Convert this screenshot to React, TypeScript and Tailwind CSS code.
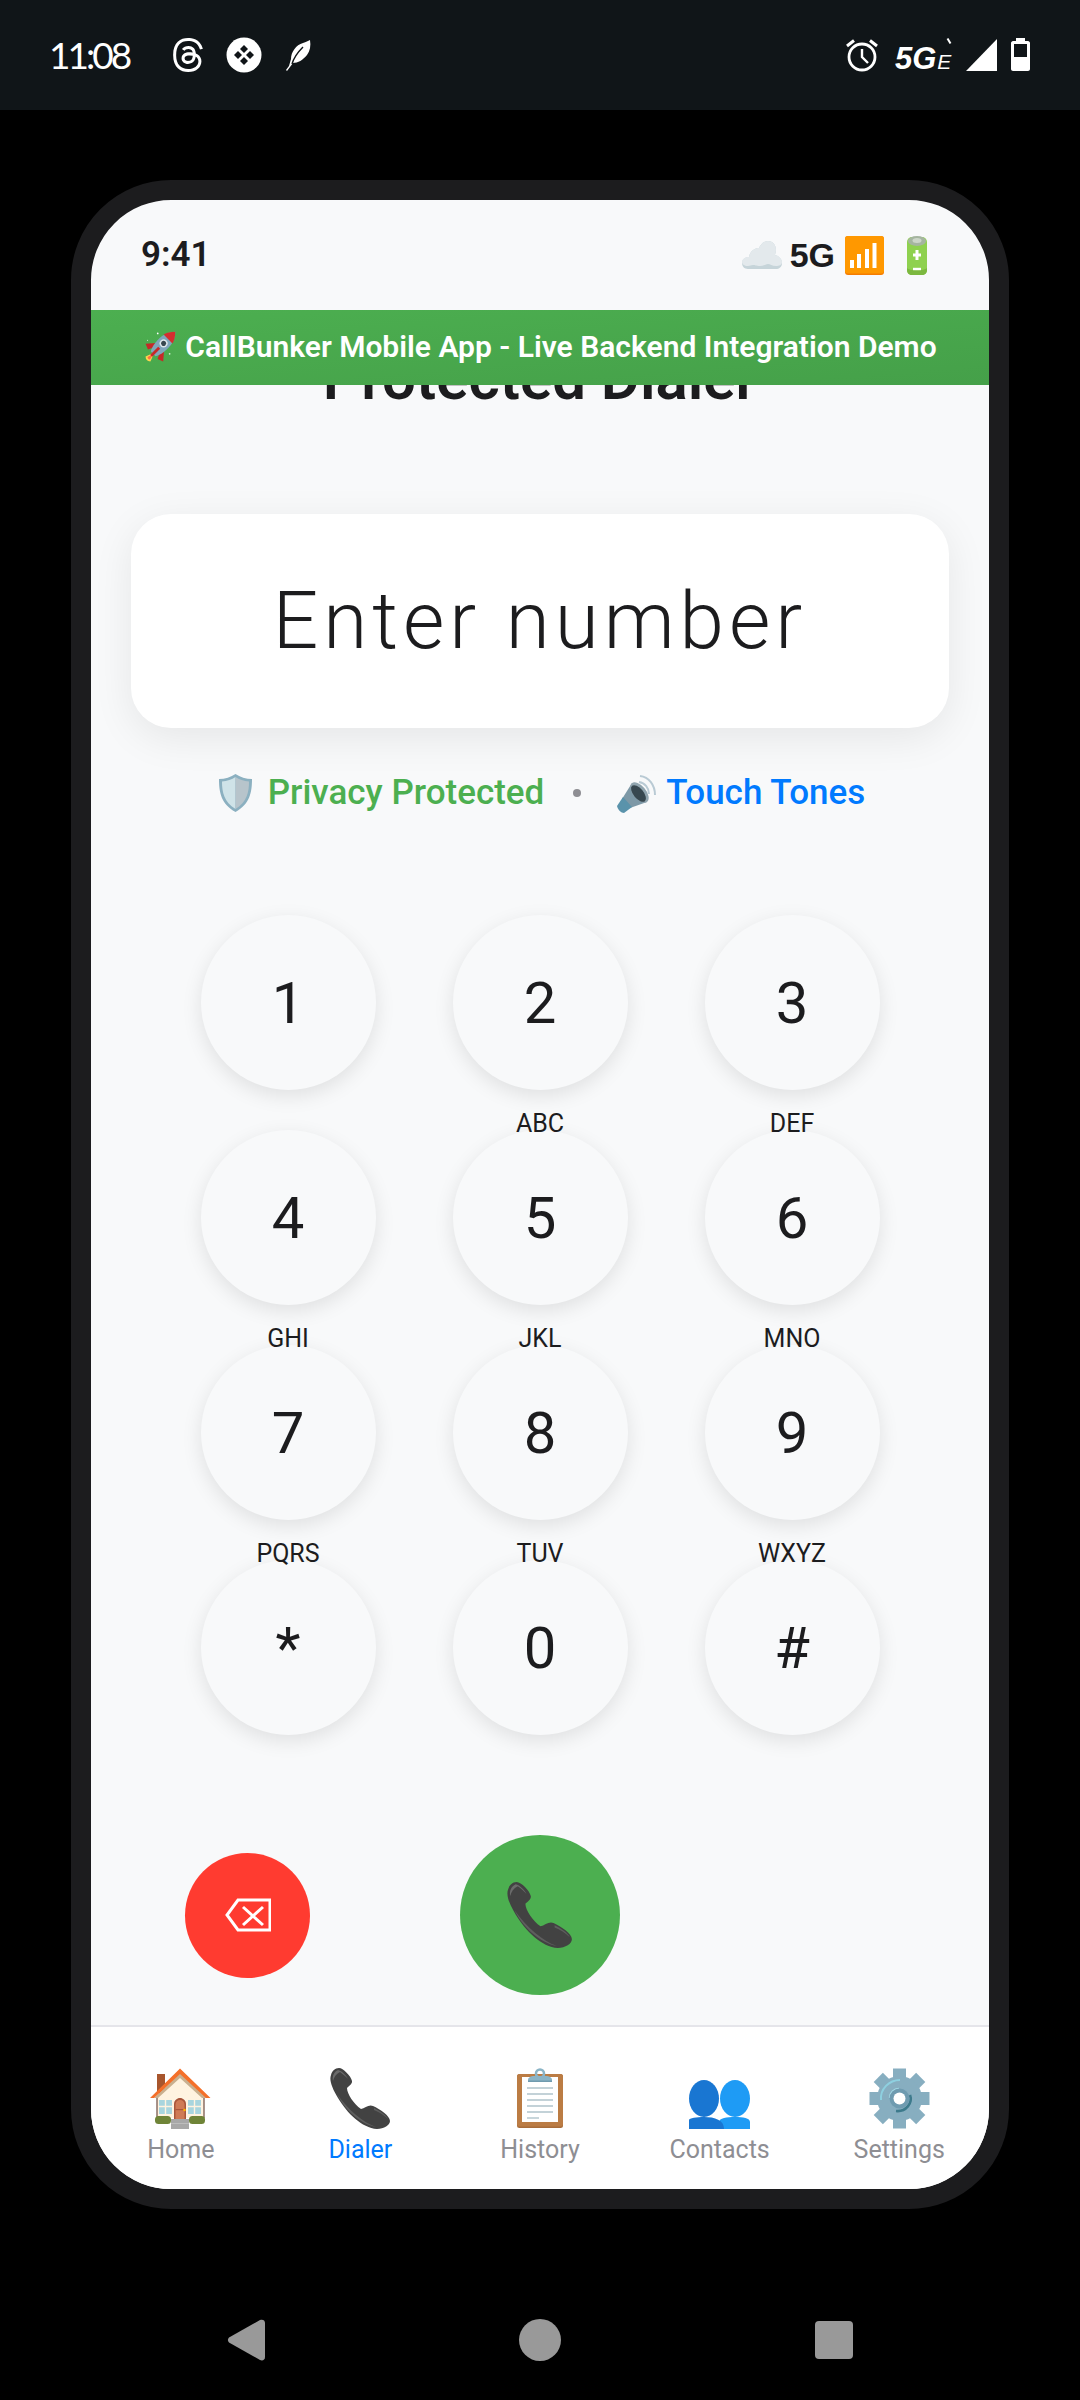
import React from 'react';
import { BsThreads } from 'react-icons/bs';

const keys = [
  { digit: '1', letters: '' },
  { digit: '2', letters: 'ABC' },
  { digit: '3', letters: 'DEF' },
  { digit: '4', letters: 'GHI' },
  { digit: '5', letters: 'JKL' },
  { digit: '6', letters: 'MNO' },
  { digit: '7', letters: 'PQRS' },
  { digit: '8', letters: 'TUV' },
  { digit: '9', letters: 'WXYZ' },
  { digit: '*', letters: '' },
  { digit: '0', letters: '' },
  { digit: '#', letters: '' },
];

const PhoneEmoji = ({ size }: { size: number }) => (
  <svg width={size} height={size} viewBox="0 0 61 61">
    <path d="M9 0C13 0 21 8 22 13C22.5 16 19 18 17 20C17 26 24 36 31 41C35 40 39 36 43 38C50 41 60 48 60 53C60 57 54 61 47 61C32 60 17 45 8 30C2 20-1 12 1 7C2 3 5 0 9 0Z" fill="#424242" />
    <path d="M8 2C4 4 2 8 3 13C4 9 6 6 10 4C13 6 16 9 18 11C16 7 12 3 8 2Z" fill="#6b6b6b" />
    <path d="M7 26C14 41 30 56 46 59C34 55 18 42 7 26Z" fill="#5e5e5e" />
    <path d="M44 40C50 43 56 47 58 51C54 47 49 44 44 42Z" fill="#5e5e5e" />
  </svg>
);

const HomeEmoji = () => (
  <svg width="61" height="61" viewBox="0 0 61 61">
    <rect x="7" y="6" width="8" height="19" fill="#a8562d" />
    <path d="M30 8L7 30V50H54V30Z" fill="#fff3e0" />
    <path d="M7 30V50M54 30V50" stroke="#6d4c41" strokeWidth="1.2" />
    <path d="M30 5L4 30H8L30 10L52 30H57Z" fill="#c9b08f" />
    <path d="M30 0.5L0 30H4L30 6L56 30H60.5Z" fill="#f4702a" />
    <rect x="9" y="32" width="13" height="14" fill="#a8d5de" />
    <path d="M15.5 32V46M9 38.5H22" stroke="#fff3e0" strokeWidth="1.4" />
    <rect x="38" y="32" width="13" height="14" fill="#a8d5de" />
    <path d="M44.5 32V46M38 38.5H51" stroke="#fff3e0" strokeWidth="1.4" />
    <path d="M24 51V36C24 32.5 27 30 30 30C33 30 36 32.5 36 36V51Z" fill="#a9553a" />
    <path d="M25.5 51V36.5C25.5 34 27.5 32 30 32C32.5 32 34.5 34 34.5 36.5V51Z" fill="#cf7a55" />
    <rect x="25.5" y="41" width="9" height="1.2" fill="#a9553a" />
    <circle cx="34.5" cy="42" r="1.3" fill="#ffb300" />
    <rect x="5" y="48" width="16" height="8" rx="3.5" fill="#6f8437" />
    <rect x="39" y="48" width="16" height="8" rx="3.5" fill="#6f8437" />
    <rect x="21" y="51" width="18" height="10" fill="#a8a8a8" />
    <rect x="21" y="55" width="18" height="1" fill="#bcbcbc" />
  </svg>
);

const ClipboardEmoji = () => (
  <svg width="46" height="61" viewBox="0 0 46 61">
    <rect x="0" y="6" width="46" height="54" rx="2.5" fill="#a86d3a" />
    <rect x="0" y="6" width="46" height="52.5" rx="2.5" fill="#bb7c44" />
    <rect x="5" y="9" width="36" height="45" fill="#ffffff" />
    <path d="M10 20H36M10 26H36M10 32H36M10 38H36M10 44H36" stroke="#b0c4cc" strokeWidth="1.4" />
    <path d="M10 50H22" stroke="#b0c4cc" strokeWidth="1.4" />
    <circle cx="23" cy="5.5" r="4" fill="none" stroke="#8ab4c6" strokeWidth="2.6" />
    <path d="M11 14V12C11 9.5 14 8 17 8H29C32 8 35 9.5 35 12V14Z" fill="#8ab4c6" />
    <rect x="11" y="12.5" width="24" height="1.5" fill="#6f9aae" />
  </svg>
);

const PeopleEmoji = () => (
  <svg width="61" height="61" viewBox="0 0 61 61">
    <ellipse cx="46" cy="30.5" rx="15" ry="18.5" fill="#1e9bf5" />
    <path d="M30 61V54C30 50 38 49 46 49C54 49 61 50 61 54V61Z" fill="#1e9bf5" />
    <ellipse cx="15" cy="30.5" rx="15" ry="18.5" fill="#1976d2" />
    <path d="M0 61V52C0 50 8 49 15 49C26 49 35 52 35 61Z" fill="#1976d2" />
  </svg>
);

const GearEmoji = () => (
  <svg width="61" height="61" viewBox="0 0 61 61">
    {[0, 45, 90, 135].map((a) => (
      <rect key={a} x="24" y="0.5" width="13" height="60" fill="#87aec0" transform={`rotate(${a} 30.5 30.5)`} />
    ))}
    <circle cx="30.5" cy="30.5" r="22.5" fill="#87aec0" />
    <path d="M12 32C11 21 20 12 31 12" fill="none" stroke="#8ed0e0" strokeWidth="2" />
    <path d="M21 30C21 25 25 21 30 21" fill="none" stroke="#a5dce8" strokeWidth="2.4" />
    <path d="M41 27C44 35 37 44 27 43" fill="none" stroke="#3d7a8c" strokeWidth="2.6" />
    <circle cx="30.5" cy="30.5" r="10" fill="#6f9bb0" />
    <circle cx="30.5" cy="30.5" r="6" fill="#ffffff" />
  </svg>
);

const RocketEmoji = () => (
  <svg width="34" height="34" viewBox="0 0 60 60">
    <circle cx="26" cy="6" r="1.5" fill="#ffffff" />
    <circle cx="8" cy="18" r="1" fill="#d8f0d8" />
    <circle cx="47" cy="42" r="1.5" fill="#d8f0d8" />
    <g transform="rotate(45 30 30)">
      <path d="M30 44L24 60C28 64 32 64 36 60Z" fill="#ffd54f" />
      <path d="M30 46L27 58C29 60 31 60 33 58Z" fill="#ff7043" />
      <path d="M20 30L8 44L18 48L22 40Z" fill="#c62828" />
      <path d="M40 30L52 44L42 48L38 40Z" fill="#c62828" />
      <path d="M30 -8C20 2 17 14 19 30C20 38 22 44 24 47H36C38 44 40 38 41 30C43 14 40 2 30 -8Z" fill="#7fa6bc" />
      <path d="M30 -8C24 -2 20 4 19 10H41C40 4 36 -2 30 -8Z" fill="#d32f2f" />
      <circle cx="30" cy="21" r="7" fill="#dde6eb" />
      <circle cx="30" cy="21" r="4.5" fill="#37474f" />
      <path d="M30 32V52" stroke="#c62828" strokeWidth="5" />
    </g>
  </svg>
);

const CloudEmoji = () => (
  <svg width="40" height="28" viewBox="0 0 40 28">
    <path d="M6 28C2 28 0 25 0 22C0 19 3 16 7 16C8 10 13 7 17 7C19 3 22 0 26 0C31 0 34 4 34 9C34 11 33 13 33 14C37 15 40 18 40 22C40 26 37 28 34 28Z" fill="#c6d4d9" />
    <path d="M6 25C2 25 0 23 0 21C0 18 3 16 7 16C8 10 13 7 17 7C19 3 22 0 26 0C31 0 34 4 34 9C34 11 33 13 33 14C37 15 40 18 40 21C40 24 37 25 34 25C30 25 28 23 26 23C24 23 22 25 18 25C14 25 13 24 11 24C9 24 8 25 6 25Z" fill="#e3e9ec" />
  </svg>
);

const SignalEmoji = () => (
  <svg width="39" height="39" viewBox="0 0 39 39">
    <rect width="39" height="39" rx="3" fill="#f57c00" />
    <rect width="39" height="37.5" rx="3" fill="#ff9800" />
    <path d="M7 32V24M14 32V18M22 32V13M29.5 32V7" stroke="#ffffff" strokeWidth="4" />
  </svg>
);

const BatteryEmoji = () => (
  <svg width="20" height="39" viewBox="0 0 20 39">
    <rect x="0" y="1" width="20" height="38" rx="5" fill="#8fd14f" />
    <path d="M0 32V34C0 37 2 39 5 39H15C18 39 20 37 20 34V32C18 35 2 35 0 32Z" fill="#7cb83f" />
    <ellipse cx="10" cy="5" rx="9" ry="5" fill="#a5b5a0" />
    <ellipse cx="10" cy="4.5" rx="4.5" ry="2.5" fill="#ccd6c8" />
    <path d="M10 14V24M6 19H14" stroke="#ffffff" strokeWidth="3" />
    <path d="M6 33H14" stroke="#ffffff" strokeWidth="2.4" />
  </svg>
);

const ShieldEmoji = () => (
  <svg width="33" height="38" viewBox="0 0 33 38">
    <path d="M16.5 0C21 3 27 5 33 5C33 18 31 30 16.5 38C2 30 0 18 0 5C6 5 12 3 16.5 0Z" fill="#8bb0c0" />
    <path d="M16.5 3V35C5 28 3 18 3 7.5C8 7 13 5.5 16.5 3Z" fill="#cfe3e8" />
    <path d="M16.5 3C20 5.5 25 7 30 7.5C30 18 28 28 16.5 35Z" fill="#b7c4cb" />
  </svg>
);

const SpeakerEmoji = () => (
  <svg width="39" height="39" viewBox="0 0 39 39">
    <path d="M23 2C32 3 38 11 38 21" fill="none" stroke="#b9cad4" strokeWidth="2" />
    <path d="M22 8C28 9 32 14 32 20" fill="none" stroke="#b9cad4" strokeWidth="2" />
    <path d="M5 25L15 9L30 28L13 34Z" fill="#7d98a6" />
    <ellipse cx="22.5" cy="18.5" rx="12" ry="6.5" transform="rotate(50 22.5 18.5)" fill="#90a4ae" />
    <ellipse cx="21.5" cy="19.5" rx="10" ry="5" transform="rotate(50 21.5 19.5)" fill="#37474f" />
    <path d="M0 32L6 23L15 33L7 39C4 39 1 36 0 32Z" fill="#5a93ab" />
  </svg>
);

const navItems = [
  { label: 'Home', icon: <HomeEmoji />, active: false },
  { label: 'Dialer', icon: <PhoneEmoji size={61} />, active: true },
  { label: 'History', icon: <ClipboardEmoji />, active: false },
  { label: 'Contacts', icon: <PeopleEmoji />, active: false },
  { label: 'Settings', icon: <GearEmoji />, active: false },
];

const SystemBar = () => (
  <div className="h-[110px] shrink-0 bg-[#101518] flex items-center text-white pb-[1px]">
    <span className="ml-[49px] w-[122px] text-[37px] leading-none font-['Lato',sans-serif] tracking-[-3px]">11:08</span>
    <BsThreads size={34} className="text-white" />
    <svg width="36" height="36" viewBox="0 0 36 36" className="ml-[21px]">
      <circle cx="18" cy="18" r="17.5" fill="#ffffff" />
      <path d="M18 8L22 12L18 16L14 12ZM18 20L22 24L18 28L14 24ZM8 18L12 14L16 18L12 22ZM20 18L24 14L28 18L24 22Z" fill="#101518" />
    </svg>
    <svg width="25" height="32" viewBox="0 0 25 32" className="ml-[24px]">
      <path d="M3 27L5 20C5 13 10 6 17 4C20 3 22 2 24 1C25 7 24 12 21 16C17 21 12 24 7 24L1 32L0 31Z" fill="#ffffff" />
      <path d="M6 25C8 18 12 13 17 8" fill="none" stroke="#101518" strokeWidth="1.4" />
    </svg>
    <div className="ml-auto flex items-center mr-[50px]">
      <svg width="32" height="34" viewBox="0 0 32 34" fill="none" stroke="#ffffff" strokeWidth="2.8">
        <circle cx="16" cy="19" r="13" />
        <path d="M16 11V19L22 25" strokeWidth="2.4" />
        <path d="M1 8L8 2.5M31 8L24 2.5" strokeWidth="3" />
      </svg>
      <div className="relative ml-[17px] w-[56px] h-[34px] flex items-baseline italic font-bold font-['Liberation_Sans',sans-serif] leading-none text-[31px]">
        <span className="mt-[5px]">5G</span>
        <span className="text-[21px] font-normal ml-[1px]">E</span>
        <span className="absolute right-[1px] top-0 w-[2px] h-[6px] bg-white -rotate-[30deg]" />
      </div>
      <svg width="31" height="32" viewBox="0 0 31 32" className="ml-[15px]">
        <path d="M31 0V32H0Z" fill="#ffffff" />
      </svg>
      <svg width="19" height="33" viewBox="0 0 19 33" className="ml-[14px]">
        <path d="M5 0H14V3H17C18 3 19 4 19 5V31C19 32 18 33 17 33H2C1 33 0 32 0 31V5C0 4 1 3 2 3H5Z" fill="#ffffff" />
        <rect x="3" y="6" width="13" height="13" fill="#101518" />
      </svg>
    </div>
  </div>
);

const DialKey = ({ digit, letters }: { digit: string; letters: string }) => (
  <div className="relative w-[175px] h-[175px] rounded-full bg-[#f8f9fa] shadow-[0_6px_20px_rgba(0,0,0,0.1)] flex items-center justify-center">
    <span className="text-[58px] leading-none text-[#1c1c1e]">{digit}</span>
    {letters && (
      <span className="absolute z-10 left-0 right-0 top-[calc(100%+21px)] text-center text-[25px] leading-[26px] text-[#1c1c1e]">
        {letters}
      </span>
    )}
  </div>
);

const App = () => {
  return (
    <div className="w-[1080px] h-[2400px] bg-black flex flex-col overflow-hidden font-['Roboto',sans-serif]">
      <SystemBar />

      <div className="flex-1 flex flex-col items-center pt-[70px]">
        <div className="w-[938px] h-[2029px] shrink-0 border-[20px] border-[#1c1c1e] rounded-[100px] bg-[#f8f9fa] overflow-hidden flex flex-col">
          <div className="h-[110px] shrink-0 flex items-center justify-between pl-[50px] pr-[62px] text-[35px] font-semibold text-[#1c1c1e]">
            <span>9:41</span>
            <div className="flex items-center">
              <CloudEmoji />
              <span className="ml-[8px] text-[34px] font-['Liberation_Sans',sans-serif] font-bold">5G</span>
              <div className="ml-[10px]"><SignalEmoji /></div>
              <div className="ml-[23px]"><BatteryEmoji /></div>
            </div>
          </div>

          <div className="h-[75px] shrink-0 z-10 pb-[2px] bg-gradient-to-br from-[#4caf50] to-[#45a049] flex items-center justify-center gap-[8px] text-white text-[30px] font-semibold">
            <RocketEmoji />
            <span>CallBunker Mobile App - Live Backend Integration Demo</span>
          </div>

          <div className="flex-1 min-h-0 overflow-hidden flex flex-col">
            <h1 className="-mt-[36px] text-center text-[60px] leading-[60px] font-semibold text-[#1c1c1e]">Protected Dialer</h1>

            <div className="mt-[105px] mx-[40px] h-[214px] shrink-0 rounded-[40px] bg-white shadow-[0_10px_40px_rgba(0,0,0,0.08)] flex items-center justify-center">
              <span className="text-[80px] leading-none font-light tracking-[5px] text-[#1c1c1e]">Enter number</span>
            </div>

            <div className="mt-[45px] h-[40px] shrink-0 pl-[4px] flex items-center justify-center text-[35px] font-medium">
              <ShieldEmoji />
              <span className="ml-[16px] text-[#4caf50]">Privacy Protected</span>
              <span className="ml-[29px] mr-[36px] w-[8px] h-[8px] rounded-full bg-[#8e8e93]" />
              <SpeakerEmoji />
              <span className="ml-[10px] text-[#007aff]">Touch Tones</span>
            </div>

            <div className="mt-[102px] grid grid-cols-[repeat(3,175px)] justify-center gap-x-[77px] gap-y-[40px]">
              {keys.map((k) => (
                <DialKey key={k.digit} digit={k.digit} letters={k.letters} />
              ))}
            </div>

            <div className="mt-[100px] px-[94px] flex items-center justify-between">
              <div className="w-[125px] h-[125px] rounded-full bg-[#ff3b30] flex items-center justify-center">
                <svg width="46" height="34" viewBox="0 0 46 34" fill="none" stroke="#ffffff" strokeWidth="3">
                  <path d="M45 2H13L2 17L13 32H45Z" />
                  <path d="M18 9L38 27M38 9L18 27" />
                </svg>
              </div>
              <div className="w-[160px] h-[160px] rounded-full bg-[#4caf50] flex items-center justify-center">
                <PhoneEmoji size={66} />
              </div>
              <div className="w-[125px] h-[125px]" />
            </div>
          </div>

          <div className="h-[164px] shrink-0 bg-white border-t-2 border-[#e5e5ea] grid grid-cols-5 pt-[41px]">
            {navItems.map((item) => (
              <div key={item.label} className="flex flex-col items-center">
                <div className="h-[61px] flex items-center justify-center">{item.icon}</div>
                <span className={`mt-[6px] text-[25px] leading-[30px] ${item.active ? 'text-[#007aff]' : 'text-[#8e8e93]'}`}>
                  {item.label}
                </span>
              </div>
            ))}
          </div>
        </div>

        <div className="flex-1 w-full flex items-start pt-[110px]">
          <div className="relative w-full flex items-center justify-center">
            <svg width="38" height="42" viewBox="0 0 38 42" className="absolute left-[227px]">
              <path d="M2 23.5C0.5 22 0.5 20 2 18.5L33 1C35.5 0 38 1 38 4V38C38 41 35.5 42 33 41Z" fill="#999999" />
            </svg>
            <div className="w-[42px] h-[42px] rounded-full bg-[#999999]" />
            <div className="absolute left-[815px] w-[38px] h-[38px] rounded-[4px] bg-[#999999]" />
          </div>
        </div>
      </div>
    </div>
  );
};

export default App;
